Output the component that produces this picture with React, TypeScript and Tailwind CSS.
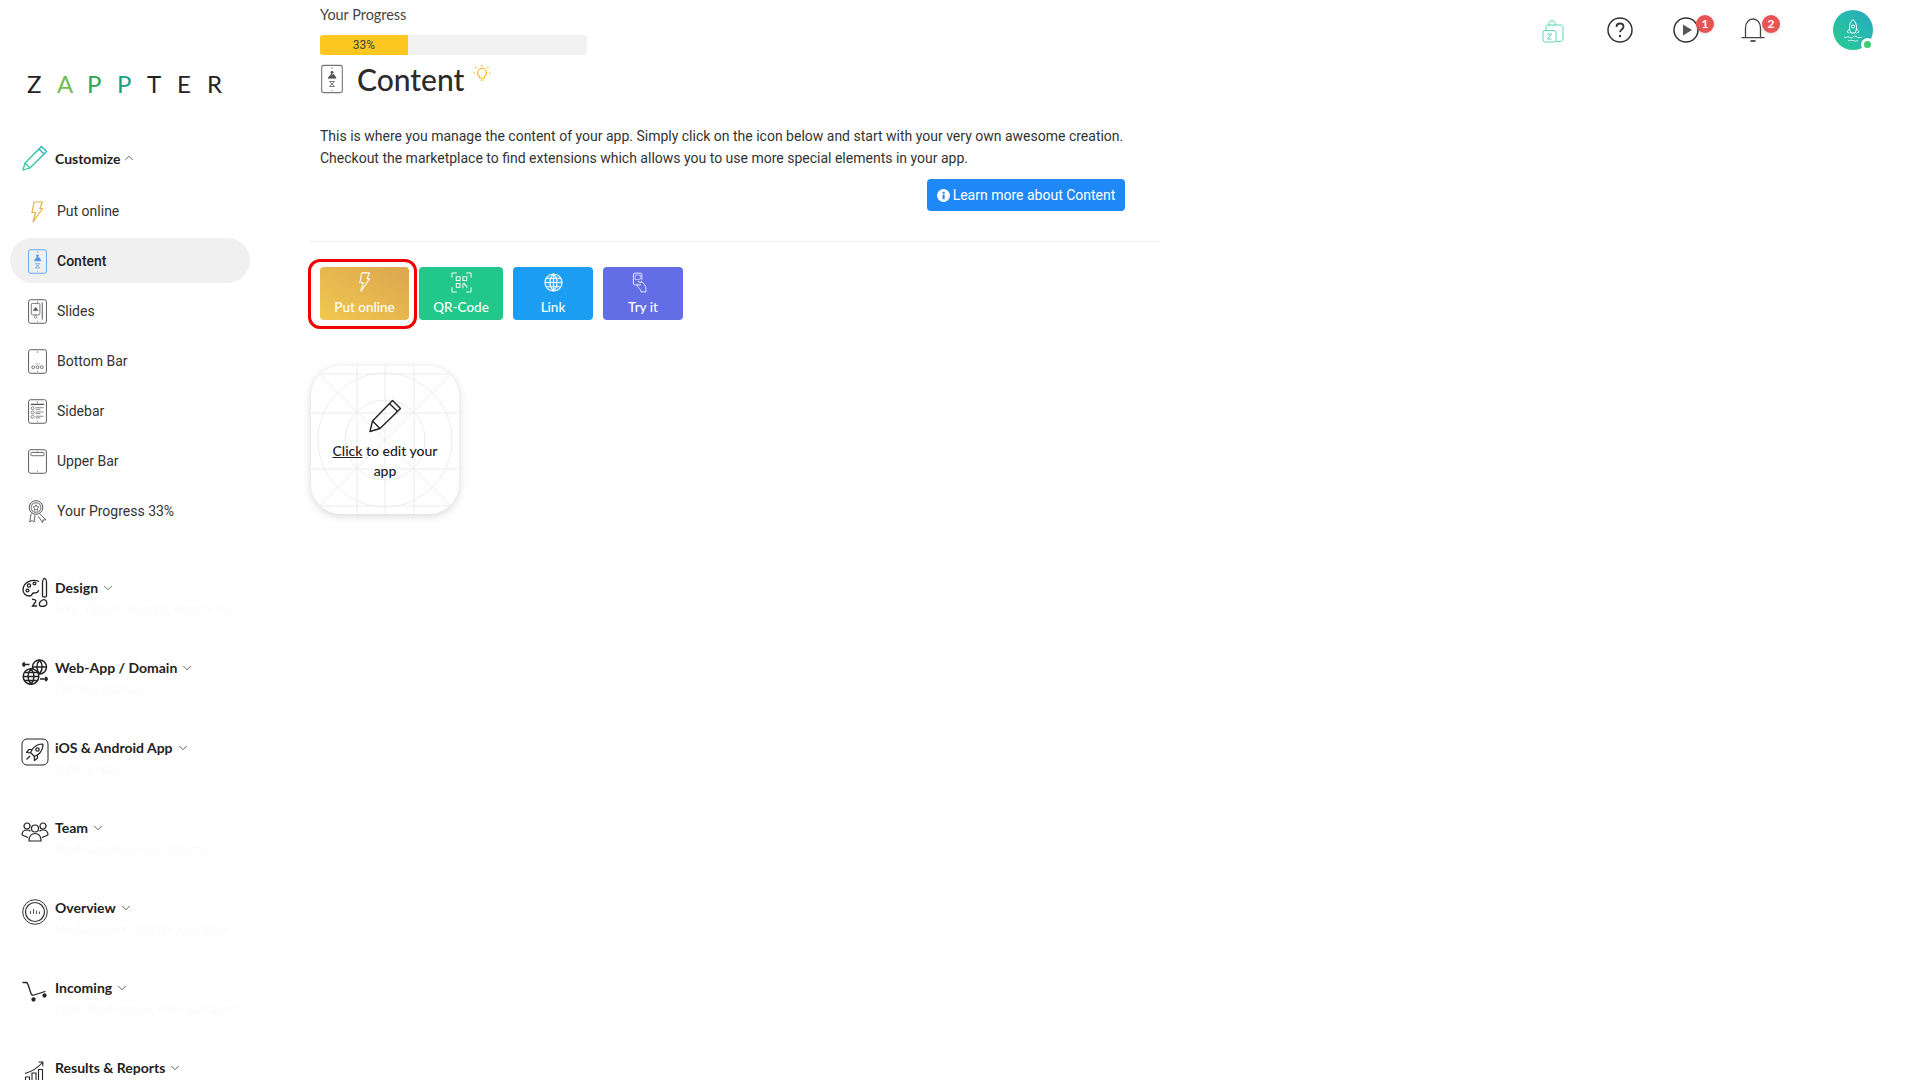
import React from 'react';
import { ChevronDown, ChevronUp } from 'lucide-react';

type IconProps = { className?: string };

const Phone: React.FC<{ className?: string; stroke?: string; children?: React.ReactNode }> = ({ className, stroke = '#555', children }) => (
  <svg viewBox="0 0 20 26" fill="none" stroke={stroke} strokeWidth="1" className={className}>
    <rect x="0.6" y="0.6" width="18.8" height="24.8" rx="2.2" />
    <path d="M9.3 3h1.4M9.6 23.4h.8" />
    {children}
  </svg>
);

const ContentGlyph: React.FC<{ stroke: string }> = ({ stroke }) => (
  <g stroke={stroke} strokeWidth="0.9">
    <path d="M6.5 12.2 9.5 8.5l1 1.2 1-.9 2.2 3.4z" fill={stroke} />
    <circle cx="10" cy="7" r="1" fill={stroke} />
    <path d="M7.5 15.3h5M8 15.8l4 3.6M12 15.8l-4 3.6M7.5 19.8h5" strokeWidth="0.7" />
  </g>
);

const icons: Record<string, React.FC<IconProps>> = {
  bolt: ({ className }) => (
    <svg viewBox="0 0 12 22" fill="none" stroke="#e8ad45" strokeWidth="1.2" strokeLinejoin="round" className={className}>
      <path d="M3 1h8.3L8.8 7.5h2.7L2 21l2.6-9.5H1z" />
    </svg>
  ),
  content: ({ className }) => (
    <Phone stroke="#5ea5f2" className={className}>
      <ContentGlyph stroke="#4b97f0" />
    </Phone>
  ),
  slides: ({ className }) => (
    <Phone className={className}>
      <rect x="3.5" y="4.5" width="9" height="12" rx="1" strokeWidth="0.8" />
      <path d="M15 3.5v18" />
      <path d="M5.5 12l2.5-3.5 2.5 3.5z" fill="#555" strokeWidth="0.6" />
      <circle cx="8" cy="18.5" r="1.4" strokeWidth="0.7" />
    </Phone>
  ),
  bottom: ({ className }) => (
    <Phone className={className}>
      <circle cx="5.5" cy="19" r="1.5" strokeWidth="0.8" />
      <circle cx="10" cy="19" r="1.5" strokeWidth="0.8" />
      <circle cx="14.5" cy="19" r="1.5" strokeWidth="0.8" />
      <path d="M7.5 15.5h5" stroke="#ccc" strokeWidth="1.5" />
    </Phone>
  ),
  sidebar: ({ className }) => (
    <Phone className={className}>
      <path d="M3 5.5h14" strokeWidth="1.4" />
      <circle cx="4.8" cy="9.5" r="1.5" strokeWidth="0.7" />
      <circle cx="4.8" cy="14" r="1.5" strokeWidth="0.7" />
      <circle cx="4.8" cy="18.5" r="1.5" strokeWidth="0.7" />
      <path d="M8 9h8.5M8 10.7h5M8 13.5h8.5M8 15.2h5M8 18h8.5M8 19.7h5" strokeWidth="0.7" />
    </Phone>
  ),
  upper: ({ className }) => (
    <Phone className={className}>
      <rect x="3" y="3.5" width="14" height="3.4" rx="1" strokeWidth="0.9" />
    </Phone>
  ),
  award: ({ className }) => (
    <svg viewBox="0 0 20 24" fill="none" stroke="#555" strokeWidth="1" className={className}>
      <circle cx="9" cy="7.5" r="6.8" />
      <circle cx="9" cy="7.5" r="4.8" strokeWidth="1.4" stroke="#999" />
      <path d="M9 4.8l.9 1.8 2 .3-1.5 1.4.4 2L9 9.4l-1.8.9.4-2-1.5-1.4 2-.3z" strokeWidth="0.8" />
      <path d="M4.2 13.5 2.6 22l2.6-1.7 1.8 1.9 1-7M12.5 13.7l6.5 6.2-3 .1-.3 2.7-4.5-6.5" strokeWidth="0.9" />
    </svg>
  ),
};

const GroupPencil: React.FC<IconProps> = ({ className }) => (
  <svg viewBox="0 0 26 26" fill="none" stroke="url(#pencilGrad)" strokeWidth="1.3" strokeLinejoin="round" className={className}>
    <defs>
      <linearGradient id="pencilGrad" x1="0" y1="1" x2="1" y2="0">
        <stop offset="0" stopColor="#35cf96" />
        <stop offset="1" stopColor="#21aeb9" />
      </linearGradient>
    </defs>
    <path d="M1 25l2-7L19.5 1.5l5 5L8 23z" />
    <path d="M3 18l5 5M17 4l5 5" />
  </svg>
);

const groupIcons: Record<string, React.FC<IconProps>> = {
  palette: ({ className }) => (
    <svg viewBox="0 0 26 30" fill="none" stroke="#222" strokeWidth="1.3" className={className}>
      <path d="M17 4.5C10 1.5 1.5 5 1 12.5c-.3 4 3 6.5 6.5 6.5 3 0 2-2.5 4-3 2-.4 5 .6 5-3" />
      <circle cx="7" cy="8.5" r="1.6" />
      <circle cx="12.5" cy="6.5" r="1.4" />
      <circle cx="5.5" cy="13.5" r="1.4" />
      <path d="M20.5 19V5.5c0-2 1-4 2-4s2 2 2 4V19c0 .7-.8 1-2 1s-2-.3-2-1z" />
      <path d="M20.5 23c-2 1-3.5 3-3 5 .4 1.5 3.5 1.5 5.5 1 2-.6 2-3 1.5-4.5-.5-1.5-2.5-2.3-4-1.5z" />
      <path d="M15 29h-4.5l3-4c1-1.5-.5-3-3.5-2.5" />
    </svg>
  ),
  globes: ({ className }) => (
    <svg viewBox="0 0 26 26" fill="none" stroke="#222" strokeWidth="1.5" className={className}>
      <circle cx="17.5" cy="8" r="7" />
      <path d="M10.5 8h14M17.5 1c-3.5 4-3.5 10 0 14M17.5 1c3.5 4 3.5 10 0 14" />
      <circle cx="9" cy="17.5" r="7.8" fill="#fff" />
      <path d="M1.2 17.5h15.6M2.5 13.5h13M2.5 21.5h13M9 9.7c-4 4.5-4 11 0 15.6M9 9.7c4 4.5 4 11 0 15.6" />
      <path d="M.5 5.5h7M.5 5.5l2.2-2M.5 5.5l2.2 2M18 20h7.5M25.5 20l-2.2-2M25.5 20l-2.2 2" strokeWidth="1.7" />
    </svg>
  ),
  rocket: ({ className }) => (
    <svg viewBox="0 0 28 28" fill="none" stroke="#222" strokeWidth="1.2" strokeLinejoin="round" className={className}>
      <rect x="1" y="1" width="26" height="26" rx="5" strokeWidth="1" />
      <path d="M22 6c-4 0-8 1.5-10.5 5l-2 3.5 4 4 3.5-2C20.5 14 22 10 22 6z" />
      <circle cx="16.5" cy="11.5" r="1.7" />
      <path d="M11 11.5H8l-2.5 3 4 .3M16.5 17v3l-3 2.5-.3-4M9 18l-3.5 3.5" />
    </svg>
  ),
  team: ({ className }) => (
    <svg viewBox="0 0 28 20" fill="none" stroke="#222" strokeWidth="1.2" className={className}>
      <circle cx="14" cy="6.5" r="3.5" />
      <circle cx="6" cy="4" r="3" />
      <circle cx="22" cy="4" r="3" />
      <path d="M8 19c0-5 2.5-7.5 6-7.5s6 2.5 6 7.5zM1 13c0-3 2-5 5-5 1.5 0 2.5.4 3.5 1.3M27 13c0-3-2-5-5-5-1.5 0-2.5.4-3.5 1.3M1 13l6 2.5M27 13l-6 2.5" />
    </svg>
  ),
  overview: ({ className }) => (
    <svg viewBox="0 0 26 26" fill="none" stroke="#333" className={className}>
      <circle cx="13" cy="13" r="12.3" strokeWidth="1" />
      <circle cx="13" cy="13" r="9.5" strokeWidth="1.2" />
      <path d="M8.5 12v3M11.5 10v5M14.5 11.5V15M17.5 12.5V15" strokeWidth="1" stroke="#555" />
    </svg>
  ),
  cart: ({ className }) => (
    <svg viewBox="0 0 26 22" fill="none" stroke="#222" strokeWidth="1.3" strokeLinecap="round" className={className}>
      <path d="M1 1.5h3c1 0 1.5.5 2 2l3 9c.5 1.5 1.5 2 3 1.5l11-3.5" />
      <circle cx="11.5" cy="18.5" r="1.5" fill="#222" />
      <circle cx="22.5" cy="14.5" r="1.5" fill="#222" />
    </svg>
  ),
  chart: ({ className }) => (
    <svg viewBox="0 0 22 22" fill="none" stroke="#222" strokeWidth="1.1" className={className}>
      <path d="M1.5 22v-6h4v6M8 22V12h4v10M14.5 22V8.5h4V22" />
      <path d="M1 12.5C8 10.5 13.5 7 18.5 1.5M14.5 1h4.3v4.3" />
    </svg>
  ),
};

const Logo = () => {
  const letters: [string, string][] = [
    ['Z', 'text-[#222] font-normal'],
    ['A', 'text-[#6fbf50] font-normal'],
    ['P', 'text-[#2aa750] font-normal'],
    ['P', 'text-[#17a084] font-normal'],
    ['T', 'text-[#222] font-normal'],
    ['E', 'text-[#222] font-normal'],
    ['R', 'text-[#222] font-normal'],
  ];
  return (
    <div className="ml-[27px] mt-[72px] flex h-6 items-center font-['Lato',sans-serif] text-[24px] leading-6">
      {letters.map(([l, c], i) => (
        <span key={i} className={`w-[30px] ${c}`}>{l}</span>
      ))}
    </div>
  );
};

const items = [
  { label: 'Put online', icon: 'bolt', size: 'h-[22px] w-[12px]' },
  { label: 'Content', icon: 'content', active: true, size: 'h-[25px] w-[19px]' },
  { label: 'Slides', icon: 'slides', size: 'h-[25px] w-[19px]' },
  { label: 'Bottom Bar', icon: 'bottom', size: 'h-[25px] w-[19px]' },
  { label: 'Sidebar', icon: 'sidebar', size: 'h-[25px] w-[19px]' },
  { label: 'Upper Bar', icon: 'upper', size: 'h-[25px] w-[19px]' },
  { label: 'Your Progress 33%', icon: 'award', size: 'h-[24px] w-[20px]' },
];

const groups = [
  { label: 'Design', sub: 'Font, Design, Buttons, Bottom Bar...', icon: 'palette', size: 'w-[26px] h-[30px]' },
  { label: 'Web-App / Domain', sub: 'Connect Domain', icon: 'globes', size: 'w-[26px] h-[26px]' },
  { label: 'iOS & Android App', sub: 'Submit App', icon: 'rocket', size: 'w-[28px] h-[28px]' },
  { label: 'Team', sub: 'Workstations, Mail Accounts', icon: 'team', size: 'w-[28px] h-[20px]' },
  { label: 'Overview', sub: 'Media Bucket, Storage, Categorie...', icon: 'overview', size: 'w-[26px] h-[26px]' },
  { label: 'Incoming', sub: 'Open Workstation, New, Complete...', icon: 'cart', size: 'w-[26px] h-[22px]' },
  { label: 'Results & Reports', sub: '', icon: 'chart', size: 'w-[22px] h-[22px]' },
];

const Sidebar = () => (
  <aside className="w-[310px] shrink-0">
    <Logo />
    <div className="mt-[42px] flex h-10 items-center pl-[22px] font-['Lato',sans-serif] text-[14px] font-bold text-[#222]">
      <GroupPencil className="h-[26px] w-[26px]" />
      <span className="ml-[7px]">Customize</span>
      <ChevronUp className="ml-[2px] h-[14px] w-[14px] text-[#555]" strokeWidth={1.5} />
    </div>
    <ul className="mt-[10px] flex flex-col gap-[5px] font-['Roboto',sans-serif] text-[14px] text-[#333]">
      {items.map((it) => {
        const Icon = icons[it.icon];
        return (
          <li key={it.label} className={`ml-[10px] flex h-[45px] w-[240px] items-center rounded-full pt-[2px] pl-[17px] ${it.active ? 'bg-[#f0f0f0] font-medium text-[#222]' : ''}`}>
            <span className="flex w-[20px] justify-center">
              <Icon className={it.size} />
            </span>
            <span className="ml-[10px]">{it.label}</span>
          </li>
        );
      })}
    </ul>
    <div className="mt-[45px]">
      {groups.map((g) => {
        const Icon = groupIcons[g.icon];
        return (
          <div key={g.label} className="h-[80px] pl-[22px]">
            <div className="flex">
              <span className="flex h-5 w-[26px] items-center justify-center overflow-visible">
                <Icon className={`shrink-0 ${g.size} translate-y-[4px]`} />
              </span>
              <div className="ml-[7px] font-['Lato',sans-serif] text-[14px] leading-5">
                <div className="flex items-center font-bold text-[#222]">
                  {g.label}
                  <ChevronDown className="ml-[3px] h-[14px] w-[14px] text-[#555]" strokeWidth={1.5} />
                </div>
                {g.sub && <div className="mt-[1px] text-[12px] text-[#fbfbfb]">{g.sub}</div>}
              </div>
            </div>
          </div>
        );
      })}
    </div>
  </aside>
);

const tiles = [
  {
    label: 'Put online',
    cls: 'w-[89px] bg-gradient-to-tr from-[#f0c94e] to-[#dca54f]',
    icon: (
      <svg viewBox="0 0 12 22" fill="none" stroke="#fff" strokeWidth="1.2" strokeLinejoin="round" className="h-[20px] w-[11px]">
        <path d="M3 1h8.3L8.8 7.5h2.7L2 21l2.6-9.5H1z" />
      </svg>
    ),
  },
  {
    label: 'QR-Code',
    cls: 'w-[84px] bg-[#22c78b]',
    icon: (
      <svg viewBox="0 0 22 22" fill="none" stroke="#fff" strokeWidth="1" className="h-[21px] w-[21px]">
        <path d="M1 6V1h5M16 1h5v5M21 16v5h-5M6 21H1v-5" />
        <rect x="5.5" y="5" width="4" height="4" />
        <rect x="12.5" y="5" width="4" height="4" />
        <rect x="5.5" y="12" width="4" height="4" />
        <path d="M12.5 17v-5h2v2h2v3" />
      </svg>
    ),
  },
  {
    label: 'Link',
    cls: 'w-[80px] bg-[#1b9ef2]',
    icon: (
      <svg viewBox="0 0 20 20" fill="none" stroke="#fff" strokeWidth="1.2" className="h-[19px] w-[19px]">
        <circle cx="10" cy="10" r="9" fill="#fff" fillOpacity="0.12" />
        <path d="M1 10h18M2.5 5.5h15M2.5 14.5h15M10 1c-5 5-5 13 0 18M10 1c5 5 5 13 0 18M10 1v18" />
      </svg>
    ),
  },
  {
    label: 'Try it',
    cls: 'w-[80px] bg-[#636ee6]',
    icon: (
      <svg viewBox="0 0 16 22" fill="none" stroke="#fff" strokeWidth="0.9" className="mr-[8px] h-[21px] w-[15px]">
        <path d="M9.5 13.5H3c-1 0-1.5-.5-1.5-1.5V2.5C1.5 1.5 2 1 3 1h6c1 0 1.5.5 1.5 1.5V8" />
        <rect x="3.3" y="3" width="5.4" height="5" strokeWidth="0.6" />
        <path d="M6 9.5l3.5 2 .5-2 3.5 4c1 1.5 1.5 4 1.5 7.5H9.5c0-2-1-3-2.5-4.5-1-1-1.5-2-1.5-3" />
      </svg>
    ),
  },
];

const AppCard = () => (
  <div className="relative mt-[46px] ml-[1px] flex h-[148px] w-[148px] flex-col items-center overflow-hidden rounded-[30px] bg-white shadow-[0_2px_8px_rgba(0,0,0,0.16)]">
    <svg viewBox="0 0 148 148" fill="none" stroke="#ececec" strokeWidth="1" className="absolute inset-0 h-full w-full">
      <path d="M0 47h148M0 103h148M46 0v148M103 0v148M0 0l148 148M148 0L0 148M0 8h148M0 140h148M74 0v148" />
      <circle cx="74" cy="74" r="67" />
      <circle cx="74" cy="74" r="40" />
    </svg>
    <svg viewBox="0 0 34 34" fill="none" stroke="#222" strokeWidth="1.4" strokeLinejoin="round" className="relative mt-[33px] h-[34px] w-[34px]">
      <path d="M2 32.5l2.5-10.5L24.5 1.5l8 8L12 29.5z" />
      <path d="M4.5 22l7.5 7.5M21.5 4.5l8 8" />
    </svg>
    <p className="relative mt-[8px] w-[120px] text-center font-['Lato',sans-serif] text-[14px] leading-5 font-medium text-[#222]">
      <span className="underline">Click</span> to edit your app
    </p>
  </div>
);

const Badge: React.FC<{ n: number }> = ({ n }) => (
  <span className="absolute top-[-2px] right-[-15px] flex h-[18px] w-[18px] items-center justify-center rounded-full bg-[#e85454] font-['Lato',sans-serif] text-[12px] font-bold text-white shadow-[0_1px_3px_rgba(0,0,0,0.15)]">
    {n}
  </span>
);

const TopIcons = () => (
  <div className="flex flex-1 items-start justify-end pt-[10px] pr-[47px]">
    <svg viewBox="0 0 22 24" fill="none" stroke="#5cd8b4" strokeWidth="1" className="mt-[9px] mr-[43px] h-[24px] w-[22px]">
      <path d="M7 7V5c0-2 1.3-3.5 3-3.5S13 3 13 5v2M4 12V7.5C4 6.8 4.8 6 5.5 6H19c1.2 0 2 .8 2 2v12c0 1.5-1 2.5-2.5 2.5H14" />
      <rect x="1" y="11.5" width="13" height="11.5" rx="2" />
      <path d="M5.5 15h4l-4 5h4" />
    </svg>
    <svg viewBox="0 0 26 26" fill="none" stroke="#333" strokeWidth="1.5" className="mt-[7px] mr-[40px] h-[26px] w-[26px]">
      <circle cx="13" cy="13" r="12" />
      <path d="M9.5 10c0-2 1.5-3.5 3.5-3.5s3.5 1.5 3.5 3.3c0 2.7-3.5 2.7-3.5 5.5" strokeWidth="1.8" />
      <circle cx="13" cy="19" r="1.2" fill="#333" stroke="none" />
    </svg>
    <div className="relative mt-[7px] mr-[42px] h-[26px] w-[26px]">
      <svg viewBox="0 0 26 26" fill="none" stroke="#333" strokeWidth="1.5" className="h-[26px] w-[26px]">
        <circle cx="13" cy="13" r="12" />
        <path d="M10 7.5 19 13l-9 5.5z" fill="#555" stroke="none" />
      </svg>
      <Badge n={1} />
    </div>
    <div className="relative mt-[7px] mr-[68px] h-[26px] w-[24px]">
      <svg viewBox="0 0 24 26" fill="none" stroke="#444" strokeWidth="1.3" className="h-[26px] w-[24px]">
        <path d="M4.5 20V11c0-5 3-9 7.5-9s7.5 4 7.5 9v9M0.5 20.7h23" />
        <path d="M9.5 24h5" strokeWidth="1.8" />
      </svg>
      <Badge n={2} />
    </div>
    <div className="relative flex h-10 w-10 items-center justify-center rounded-full bg-gradient-to-tr from-[#2bcb8f] to-[#2aa9c4]">
      <svg viewBox="0 0 20 24" fill="none" stroke="#fff" strokeWidth="1" className="h-[24px] w-[20px]">
        <path d="M10 1.5c2.5 2 3.5 5 3.5 8 0 2-.7 4-1.5 5.500H8c-.8-1.500-1.500-3.500-1.500-5.500 0-3 1-6 3.500-8z" />
        <circle cx="10" cy="8.5" r="1.5" />
        <path d="M6.5 10.5 4 14l2.5 1M13.5 10.5 16 14l-2.5 1M1 19c2 1.5 3-1 5 0s3 1.5 4 0 3-1 4 0 3 1 5 0M5 22.5c2 1 3-.8 5 0s3 .8 5 0" strokeWidth="0.8" />
      </svg>
      <span className="absolute right-[-1px] bottom-[-1px] h-[13px] w-[13px] rounded-full border-[3px] border-white bg-[#3ecb72]" />
    </div>
  </div>
);

export default function App() {
  return (
    <div className="flex h-screen overflow-hidden bg-white">
      <Sidebar />
      <main className="w-[850px] shrink-0">
        <div className="flex w-[815px] flex-col pt-[5px] pl-[10px]">
          <div className="font-['Lato',sans-serif] text-[14.4px] leading-5 text-[#444]">Your Progress</div>
          <div className="mt-[10px] h-5 w-[267px] overflow-hidden rounded-[3px] bg-[#f2f2f2]">
            <div className="flex h-full w-[88px] items-center justify-center bg-[#fdc71f] font-['Roboto',sans-serif] text-[12px] text-[#444]">33%</div>
          </div>
          <div className="mt-[4px] mb-[1px] flex h-[40px] items-center">
            <Phone stroke="#777" className="ml-[1px] h-[30px] w-[22px]">
              <ContentGlyph stroke="#555" />
            </Phone>
            <h1 className="ml-[14px] font-['Lato',sans-serif] text-[30px] leading-10 font-medium text-[#2b2b2b]">Content</h1>
            <svg viewBox="0 0 18 18" fill="none" stroke="#f8b81a" strokeWidth="1.2" className="mb-[12px] ml-[9px] h-[18px] w-[18px]">
              <path d="M6.5 14v-1.5C5 11.5 4.5 10.2 4.5 9a4.5 4.5 0 0 1 9 0c0 1.2-.5 2.5-2 3.5V14zM7.5 16h3M9 1v1.5M2.5 3l1 1M15.5 3l-1 1M.5 9H2M16 9h1.5" />
            </svg>
          </div>
          <p className="mt-[25px] font-['Roboto',sans-serif] text-[14px] leading-[22px] text-[#333]">
            This is where you manage the content of your app. Simply click on the icon below and start with your very own awesome creation.
            <br />
            Checkout the marketplace to find extensions which allows you to use more special elements in your app.
          </p>
          <button className="mt-[10px] flex h-[32px] w-[198px] items-center justify-center gap-[3px] self-end rounded-[4px] bg-[#1e88f7] font-['Roboto',sans-serif] text-[14px] text-white">
            <svg viewBox="0 0 14 14" className="h-[13px] w-[13px]">
              <circle cx="7" cy="7" r="7" fill="#fff" />
              <rect x="6" y="6" width="2.2" height="5" fill="#1e88f7" />
              <rect x="6" y="3" width="2.2" height="2" fill="#1e88f7" />
            </svg>
            Learn more about Content
          </button>
        </div>
        <hr className="mt-[30px] border-t border-[#eeeeee]" />
        <div className="pl-[10px]">
          <div className="mt-[25px] flex gap-[10px]">
            {tiles.map((t, i) => (
              <div key={t.label} className={`relative flex h-[53px] flex-col items-center rounded-[4px] ${t.cls}`}>
                {i === 0 && <span className="absolute -top-[8px] -right-[8px] -bottom-[9px] -left-[12px] rounded-[12px] border-[3px] border-[#f00000]" />}
                <span className="flex h-[30px] items-center justify-center">{t.icon}</span>
                <span className="font-['Lato',sans-serif] text-[13.5px] leading-5 font-medium text-white">{t.label}</span>
              </div>
            ))}
          </div>
        </div>
        <AppCard />
      </main>
      <TopIcons />
    </div>
  );
}
